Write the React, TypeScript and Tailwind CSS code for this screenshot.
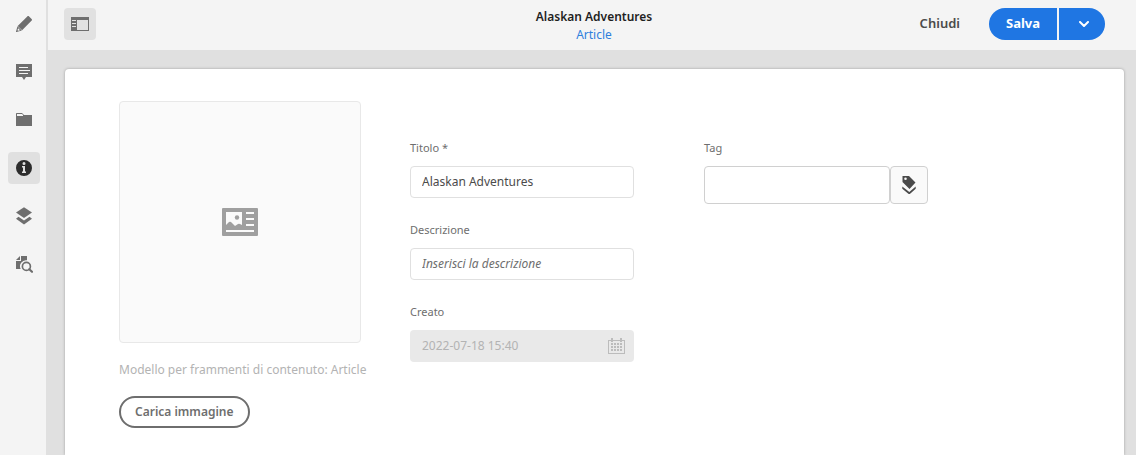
import type { ReactNode } from 'react';

type RailItem = { label: string; icon: ReactNode; active?: boolean };

const railItems: RailItem[] = [
  {
    label: 'Modifica',
    icon: (
      <svg width="18" height="18" viewBox="0 0 18 18" fill="currentColor" aria-hidden="true">
        <path d="M12.300 1.400 2.700 11l4.400 4.200 9.600-9.700c.5-.5.4-1-.1-1.600l-2.500-2.400c-.6-.6-1.300-.6-1.800-.1Z" />
        <path fillRule="evenodd" d="M2.500 11.200 1 16.500c-.1.400.1.600.5.500l5.400-1.600-4.400-4.200Zm.6 2 2 2-2 .6-.6-.6.600-2Z" />
      </svg>
    ),
  },
  {
    label: 'Annotazioni',
    icon: (
      <svg width="18" height="18" viewBox="0 0 18 18" fill="currentColor" aria-hidden="true">
        <path fillRule="evenodd" d="M1 1h16v13h-6l-2 3-2-3H1V1Zm3 3v1h9V4H4Zm0 3v1h11V7H4Zm0 3v1h9v-1H4Z" />
      </svg>
    ),
  },
  {
    label: 'Contenuto associato',
    icon: (
      <svg width="18" height="18" viewBox="0 0 18 18" fill="currentColor" aria-hidden="true">
        <path fillRule="evenodd" d="M1 3c0-.6.400-1 1-1h5l2 2h8v11H1V3Zm1 0v2h6V4L7 3H2Z" />
      </svg>
    ),
  },
  {
    label: 'Metadati',
    active: true,
    icon: (
      <svg width="18" height="18" viewBox="0 0 18 18" fill="currentColor" aria-hidden="true">
        <path fillRule="evenodd" d="M9 1a8 8 0 1 0 0 16A8 8 0 0 0 9 1Zm0 2a1.500 1.500 0 1 1 0 3 1.500 1.500 0 0 1 0-3ZM7 7h3v5.500h1V14H7v-1.500h1v-4H7V7Z" />
      </svg>
    ),
  },
  {
    label: 'Struttura',
    icon: (
      <svg width="18" height="18" viewBox="0 0 18 18" fill="currentColor" aria-hidden="true">
        <path d="M9 .3 17 5.600 9 11 1 5.600 9 .3Z" />
        <path d="M3.500 9.800 9 13.400l5.500-3.600L17 11.700 9 17.500 1 11.700l2.500-1.900Z" />
      </svg>
    ),
  },
  {
    label: 'Anteprima',
    icon: (
      <svg width="18" height="18" viewBox="0 0 18 18" fill="currentColor" aria-hidden="true">
        <path d="M5 1v4H1l4-4ZM6 1h6v4.300A6 6 0 0 0 5.700 14H1V6h5V1Z" />
        <circle cx="11.400" cy="11.400" r="4" fill="none" stroke="currentColor" strokeWidth="1.700" />
        <path d="m14.300 14.300 2.700 2.500" fill="none" stroke="currentColor" strokeWidth="2.200" strokeLinecap="round" />
      </svg>
    ),
  },
];

function Rail() {
  return (
    <nav aria-label="Pannelli" className="flex shrink-0 flex-col gap-4 border-r-2 border-[#e0e0e0] bg-[#f4f4f4] py-2 pr-1.5 pl-2">
      {railItems.map((item) => (
        <button
          key={item.label}
          type="button"
          aria-label={item.label}
          aria-pressed={!!item.active}
          className={
            item.active
              ? 'flex size-8 items-center justify-center rounded bg-[#e0e0e0] text-[#2c2c2c]'
              : 'flex size-8 items-center justify-center rounded text-[#6e6e6e]'
          }
        >
          {item.icon}
        </button>
      ))}
    </nav>
  );
}

function Header() {
  return (
    <header className="grid h-[50px] grid-cols-[1fr_auto_1fr] items-center bg-[#f4f4f4] pb-0.5 pl-1">
      <div className="pl-3">
        <button type="button" aria-label="Mostra pannello laterale" className="flex size-8 items-center justify-center rounded bg-[#e1e1e1] text-[#6e6e6e]">
          <svg width="18" height="14" viewBox="0 0 18 14" fill="currentColor" aria-hidden="true">
            <path fillRule="evenodd" d="M0 0h18v14H0V0Zm6 3v10h11V3H6ZM1 3v1h4V3H1Zm0 3v1h4V6H1Zm0 3v1h4V9H1Z" />
          </svg>
        </button>
      </div>
      <div className="pt-1 text-center">
        <h1 className="text-[12px] leading-[18px] font-semibold text-[#1f1f1f]">Alaskan Adventures</h1>
        <a href="#article" className="block text-[12px] leading-[18px] text-[#2f7fdc]">Article</a>
      </div>
      <div className="flex items-center justify-end pr-[31px]">
        <button type="button" className="mr-[29px] text-[13px] font-semibold text-[#4b4b4b]">Chiudi</button>
        <div className="flex gap-0.5">
          <button type="button" className="h-8 w-[68px] rounded-l-full bg-[#1f76e3] text-[13px] font-bold text-white">Salva</button>
          <button type="button" aria-label="Altre opzioni di salvataggio" className="flex h-8 w-[46px] items-center justify-center rounded-r-full bg-[#1f76e3] pl-1 text-white">
            <svg width="10" height="6" viewBox="0 0 10 6" fill="none" stroke="currentColor" strokeWidth="2" strokeLinecap="round" strokeLinejoin="round" aria-hidden="true">
              <path d="m1 1 4 4 4-4" />
            </svg>
          </button>
        </div>
      </div>
    </header>
  );
}

const labelClass = 'block text-[11px] leading-5 text-[#6e6e6e]';
const inputClass = 'h-8 w-full rounded border border-[#e0e0e0] bg-white px-[11px] pb-0.5 text-[12px] text-[#4b4b4b] placeholder:text-[#6e6e6e] placeholder:italic';

function Thumbnail() {
  return (
    <section className="flex w-[251px] shrink-0 flex-col items-start">
      <div className="flex size-[242px] items-center justify-center rounded border border-[#e8e8e8] bg-[#fafafa] text-[#9f9f9f]">
        <svg width="36" height="28" viewBox="0 0 36 28" fill="currentColor" role="img" aria-label="Frammento di contenuto">
          <path fillRule="evenodd" d="M1 0h34a1 1 0 0 1 1 1v26a1 1 0 0 1-1 1H1a1 1 0 0 1-1-1V1a1 1 0 0 1 1-1Zm3 4v13l3-3 1-.3 1 .3 4 4 3-2 1-.3 1 .3 2 1V4H4Zm20 0v2h8V4h-8Zm0 6v2h8v-2h-8Zm0 6v2h8v-2h-8ZM4 22v2h28v-2H4Z" />
          <circle cx="15" cy="9.500" r="2.200" />
        </svg>
      </div>
      <p className="mt-[17px] text-[12px] leading-5 whitespace-nowrap text-[#b3b3b3]">Modello per frammenti di contenuto: Article</p>
      <button type="button" className="mt-4 h-8 rounded-full border-2 border-[#6e6e6e] px-3.5 text-[12px] font-semibold whitespace-nowrap text-[#6e6e6e]">
        Carica immagine
      </button>
    </section>
  );
}

function Fields() {
  return (
    <div className="flex w-56 shrink-0 flex-col gap-[22px]">
      <div>
        <label htmlFor="title" className={labelClass}>Titolo *</label>
        <input id="title" type="text" required defaultValue="Alaskan Adventures" className={'mt-2 ' + inputClass} />
      </div>
      <div>
        <label htmlFor="description" className={labelClass}>Descrizione</label>
        <input id="description" type="text" placeholder="Inserisci la descrizione" className={'mt-2 ' + inputClass} />
      </div>
      <div>
        <label htmlFor="created" className={labelClass}>Creato</label>
        <div className="mt-2 flex h-8 items-center rounded bg-[#e9e9e9] pr-[9px] pl-3 text-[#bcbcbc]">
          <input id="created" type="text" disabled defaultValue="2022-07-18 15:40" className="min-w-0 flex-1 bg-transparent text-[12px] text-[#b3b3b3]" />
          <svg width="17" height="16" viewBox="0 0 17 16" fill="currentColor" aria-hidden="true">
            <path fillRule="evenodd" d="M3 0h2v2h7V0h2v2h3v14H0V2h3V0ZM1 3v12h15V3h-2v1h-2V3H5v1H3V3H1Z" />
            <path d="M3 5h2v2H3zM6 5h2v2H6zM9 5h2v2H9zM12 5h2v2h-2zM3 8h2v2H3zM6 8h2v2H6zM9 8h2v2H9zM12 8h2v2h-2zM3 11h2v2H3zM6 11h2v2H6zM9 11h2v2H9zM12 11h2v2h-2z" />
          </svg>
        </div>
      </div>
    </div>
  );
}

function TagField() {
  return (
    <div className="w-56 shrink-0">
      <label htmlFor="tag" className={labelClass}>Tag</label>
      <div className="mt-2 flex">
        <input id="tag" type="text" className="h-[38px] min-w-0 flex-1 rounded border border-[#d0d0d0] bg-white px-3 text-[12px]" />
        <button type="button" aria-label="Scegli tag" className="flex h-[38px] w-[38px] items-center justify-center rounded border border-[#d0d0d0] bg-[#fafafa] text-[#4b4b4b]">
          <svg width="14" height="18" viewBox="0 0 14 18" fill="currentColor" aria-hidden="true">
            <path fillRule="evenodd" d="M.5 0H7l6.500 6.500L7.500 13 .5 6V0Zm3 1.500a1.300 1.300 0 1 0 0 2.600 1.300 1.300 0 0 0 0-2.600Z" />
            <path d="M.3 10.500v2.300L7.300 18.500l6.400-5.700v-2.300l-6.400 5.400-7-5.400Z" />
          </svg>
        </button>
      </div>
    </div>
  );
}

export default function App() {
  return (
    <div className="flex min-h-screen bg-[#e0e0e0] font-['Noto_Sans',sans-serif]">
      <Rail />
      <div className="flex min-w-0 flex-1 flex-col">
        <Header />
        <main className="flex flex-1 pt-[19px] pr-3 pl-[17px]">
          <form className="flex flex-1 items-start rounded-t bg-white pt-8 pb-[27px] pl-[54px] shadow-[0_0_3px_rgba(0,0,0,0.3)]">
            <Thumbnail />
            <div className="flex gap-[70px] pt-[37px] pl-10">
              <Fields />
              <TagField />
            </div>
          </form>
        </main>
      </div>
    </div>
  );
}
